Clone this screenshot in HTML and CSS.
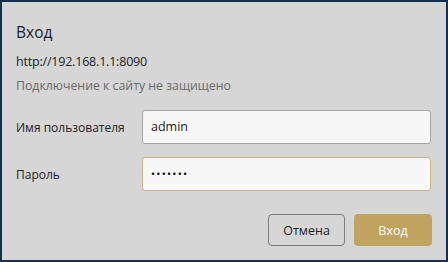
FILE: index.html
```html
<!DOCTYPE html>
<html lang="ru">
<head>
<meta charset="utf-8">
<link rel="stylesheet" href="styles.css">
</head>
<body>
<div class="dialog">
  <h1 class="title">Вход</h1>
  <div class="url">http://192.168.1.1:8090</div>
  <div class="note">Подключение к сайту не защищено</div>
  <div class="form">
    <label class="label">Имя пользователя</label>
    <div class="input">admin</div>
    <label class="label">Пароль</label>
    <div class="input focused"><span class="dots">•••••••</span></div>
  </div>
  <div class="actions">
    <button class="btn cancel">Отмена</button>
    <button class="btn primary">Вход</button>
  </div>
</div>
</body>
</html>
```
FILE: styles.css
```css
* { box-sizing: border-box; }
html, body { margin: 0; padding: 0; }
body {
  width: 448px;
  height: 262px;
  background: #14304d;
  font-family: "Open Sans", "Noto Sans", sans-serif;
  padding: 2px;
}
.dialog {
  width: 444px;
  height: 258px;
  background: #d6d6d6;
  padding: 20px 14px 0 14px;
  display: flex;
  flex-direction: column;
}
.title {
  margin: 0;
  font-size: 15.5px;
  font-weight: 400;
  color: #1e1e1e;
  line-height: 20px;
}
.url {
  margin-top: 12px;
  font-size: 12.5px;
  line-height: 16px;
  color: #222;
  letter-spacing: -0.2px;
}
.note {
  margin-top: 8px;
  font-size: 12.3px;
  line-height: 16px;
  color: #6a6a6a;
}
.form {
  margin-top: 16px;
  display: grid;
  grid-template-columns: 126px 1fr;
  row-gap: 13px;
  align-items: center;
  padding-right: 1px;
}
.label {
  font-size: 12px;
  color: #222;
}
.input {
  height: 34px;
  background: #f7f7f7;
  border: 1px solid #a6a6a6;
  border-radius: 3px;
  padding: 0 8px;
  font-size: 12.5px;
  line-height: 32px;
  color: #222;
}
.input.focused { border-color: #c5b48c; }
.dots { font-size: 11px; letter-spacing: 1.2px; font-weight: 400; color: #111; }
.actions {
  margin-top: 23px;
  display: flex;
  justify-content: flex-end;
  gap: 9px;
}
.btn {
  height: 32px;
  font-family: inherit;
  font-size: 12.5px;
  border-radius: 4px;
  padding: 0;
  cursor: pointer;
}
.cancel {
  width: 77px;
  background: #d6d6d6;
  border: 1px solid #7d7d7d;
  color: #222;
}
.primary {
  width: 78px;
  background: #c0a35f;
  border: 1px solid #c0a35f;
  color: #fff;
}
```
